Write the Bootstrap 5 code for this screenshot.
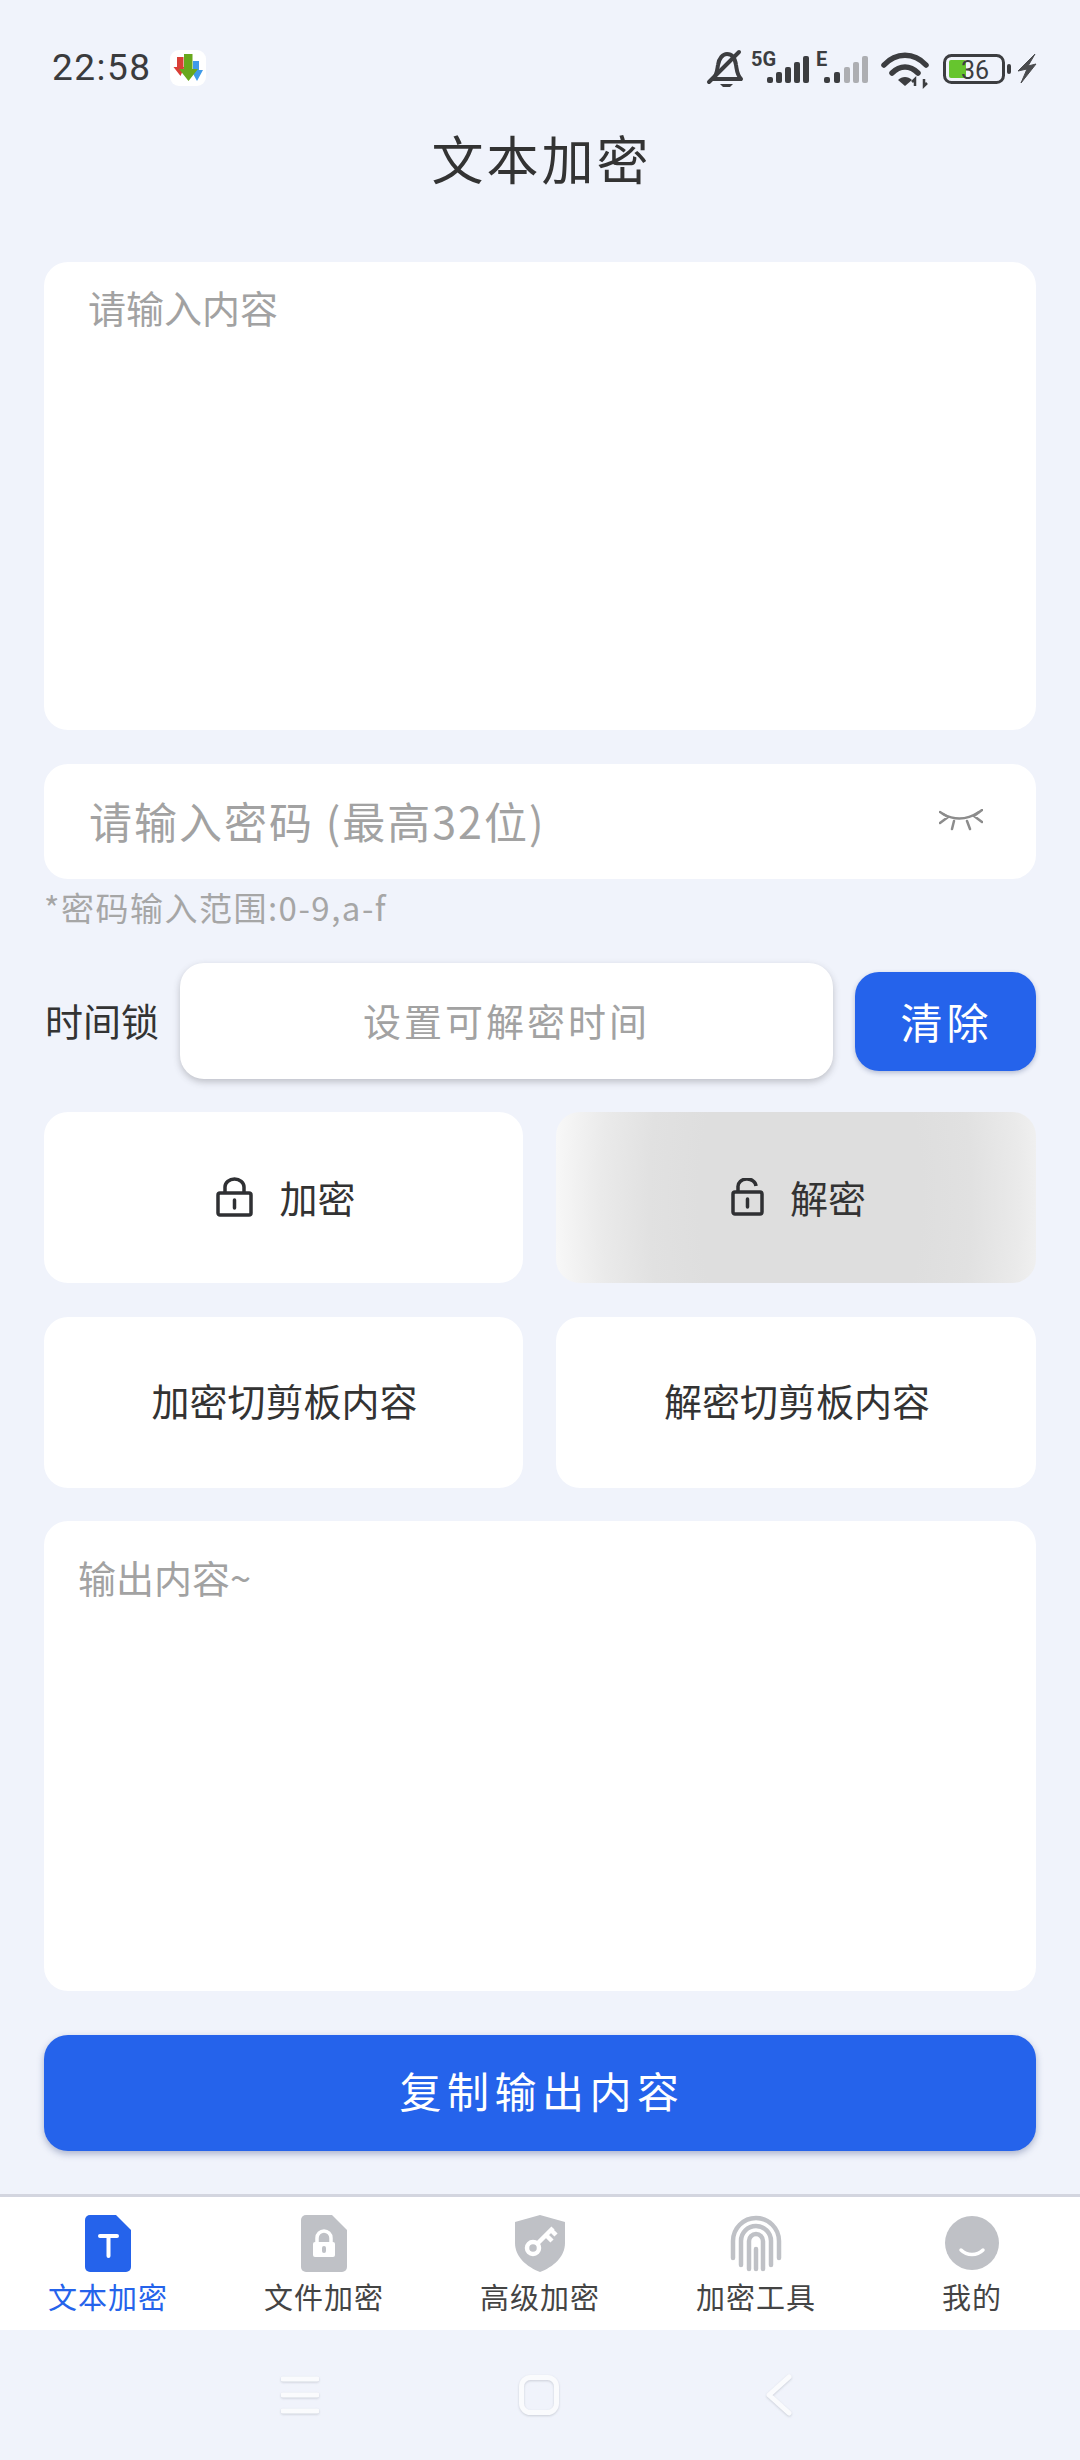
<!DOCTYPE html>
<html lang="zh-CN">
<head>
    <meta charset="UTF-8" />
    <title>文本加密</title>
    <meta name="viewport" content="width=device-width, initial-scale=1" />
    <link href="https://cdn.jsdelivr.net/npm/bootstrap@5.3.0/dist/css/bootstrap.min.css" rel="stylesheet" />
    <style>
        body {
            background-color: #f0f3fb;
            color: #333;
            font-family: "Noto Sans CJK SC", "Noto Sans", sans-serif;
            width: 1080px;
            height: 2460px;
            overflow: hidden;
        }
        .status-row { height: 136px; padding: 0 40px 0 52px; }
        .status-time { font-family: Roboto, sans-serif; font-size: 37px; letter-spacing: 1.500px; color: #3a3b3d; width: 118px; }
        .page-title { font-size: 52px; line-height: 43px; height: 48px; padding-left: 3px; letter-spacing: 3px; margin: 0; font-weight: 400; text-align: center; color: #333; }
        .page-main { padding: 0 44px; margin-top: 78px; }
        .panel { background: #fff; border-radius: 24px; border: 0; }
        .field-hint { color: #a2a2a2; }
        .panel-input { height: 468px; padding: 21px 44px; font-size: 38px; line-height: 48px; }
        .panel-pass { height: 115px; margin-top: 34px; padding: 0 53px 3px 45px; font-size: 43px; letter-spacing: 2px; }
        .pass-hint { font-size: 33px; line-height: 44px; margin-top: 6px; letter-spacing: 1.500px; color: #a6a6a6; }
        .lock-row { margin-top: 34px; height: 116px; }
        .lock-label { width: 136px; font-size: 38px; padding: 0 0 3px 1px; color: #333; }
        .lock-input { width: 653px; height: 116px; padding-bottom: 4px; font-size: 38px; letter-spacing: 3px; box-shadow: 0 3px 7px rgba(60, 60, 70, .28); }
        .btn-clear { width: 181px; height: 99px; margin-left: 22px; background: #2563eb; color: #fff; font-size: 42px; letter-spacing: 4px; border-radius: 24px; border: 0; padding: 0 0 2px 2px; box-shadow: 0 2px 5px rgba(40, 60, 120, .3); }
        .btn-clear:hover { background: #2563eb; color: #fff; }
        .action-grid { display: grid; grid-template-columns: 479px 480px; column-gap: 33px; row-gap: 34px; margin-top: 33px; }
        .btn-action { height: 171px; font-size: 38px; color: #333; padding: 0 0 6px 2px; }
        .btn-action:hover { background: #fff; color: #333; }
        .btn-pressed, .btn-pressed:hover { background: radial-gradient(ellipse 58% 300% at 53% 50%, #dedede 40%, #e1e1e1 58%, #eaeaea 75%, #f6f6f6 90%, #fff 100%); }
        .action-inner { gap: 26px; margin-top: 4px; padding-left: 3px; }
        .panel-output { height: 470px; margin-top: 33px; padding: 32px 34px; font-size: 38px; line-height: 48px; }
        .btn-copy { display: block; width: 100%; height: 116px; margin-top: 44px; padding: 0 0 8px 4px; background: #2563eb; color: #fff; font-size: 42px; letter-spacing: 5.500px; border-radius: 24px; border: 0; box-shadow: 0 3px 7px rgba(40, 60, 120, .35); }
        .btn-copy:hover { background: #2563eb; color: #fff; }
        .tab-strip { margin-top: 43px; height: 136px; border-top: 3px solid #d3d5df; background: #fff; }
        .tab-item { width: 216px; padding-top: 18px; font-size: 29px; letter-spacing: 1px; line-height: 36px; color: #444; }
        .tab-item svg { display: block; margin-bottom: 6px; }
        .tab-active { color: #2563eb; }
        .sys-nav { height: 130px; padding-left: 281px; }
        .sys-nav svg { filter: drop-shadow(0 1px 1px rgba(120, 125, 140, .3)); }
        .sys-home { margin-left: 200px; }
        .sys-back { margin-left: 207px; }
    </style>
</head>
<body>

    <div class="status-row d-flex align-items-center">
        <div class="status-time">22:58</div>
        <svg width="36" height="36" viewBox="0 0 36 36">
            <rect width="36" height="36" rx="9" fill="#fff" />
            <path d="M7 7h6.500v10h1l-4 9-7-9H7z" fill="#d93f36" />
            <path d="M23 11h6v9h4l-6 11-6-11h2z" fill="#3f9ae8" />
            <path d="M14 4h8.500v15H28l-9.500 12L9 19h5z" fill="#68a81c" />
        </svg>
        <svg class="ms-auto" width="340" height="45" viewBox="700 45 340 45">
            <!-- bell with slash -->
            <path d="M713 78c4-4 4-8 5-14 1-7 5-11 9-11 5 0 8 4 9 11 1 6 1 10 5 14z" fill="none" stroke="#3c3d40" stroke-width="4" stroke-linejoin="round" />
            <path d="M709 81 739 51" stroke="#3c3d40" stroke-width="4" stroke-linecap="round" />
            <path d="M720 83h13l-3 3h-7z" fill="#3c3d40" />
            <!-- 5G signal -->
            <text x="751" y="65" font-family="Roboto, sans-serif" font-size="20" font-weight="700" fill="#3c3d40">5G</text>
            <g fill="#3c3d40">
                <rect x="767" y="76" width="6" height="6" rx="2" />
                <rect x="776" y="71" width="6" height="11" rx="2" />
                <rect x="785" y="66" width="6" height="16" rx="2" />
                <rect x="794" y="61" width="6" height="21" rx="2" />
                <rect x="803" y="55" width="6" height="27" rx="2" />
            </g>
            <!-- E signal -->
            <text x="816" y="65" font-family="Roboto, sans-serif" font-size="20" font-weight="700" fill="#3c3d40">E</text>
            <g fill="#3c3d40">
                <rect x="824" y="76" width="6" height="6" rx="2" />
                <rect x="834" y="71" width="6" height="11" rx="2" />
            </g>
            <g fill="#adaeb2">
                <rect x="844" y="66" width="6" height="16" rx="2" />
                <rect x="853" y="61" width="6" height="21" rx="2" />
                <rect x="862" y="55" width="6" height="27" rx="2" />
            </g>
            <!-- wifi -->
            <g fill="none" stroke="#3c3d40" stroke-width="5.500" stroke-linecap="round">
                <path d="M884 64c12-13 30-13 42 0" />
                <path d="M892 72c8-8 18-8 26 0" />
            </g>
            <path d="M898 79c4-4 10-4 14 0l-7 6z" fill="#3c3d40" />
            <path d="M915 85v-7l-3 3M924 78v7l3-3" fill="none" stroke="#3c3d40" stroke-width="2.500" />
            <!-- battery -->
            <rect x="944.500" y="54.500" width="59" height="27" rx="7" fill="none" stroke="#3c3d40" stroke-width="3" />
            <rect x="949" y="59" width="17" height="18" rx="2" fill="#66c52e" />
            <text x="975" y="78" text-anchor="middle" font-family="Roboto, sans-serif" font-size="25" fill="#3c3d40">36</text>
            <rect x="1007" y="63" width="4" height="10" rx="2" fill="#3c3d40" />
            <path d="M1035 53 1018 70 1027 68 1021 82 1036 63 1028 65z" fill="#4a4b4e" stroke="#4a4b4e" stroke-width="1" stroke-linejoin="round" />
        </svg>
    </div>

    <h1 class="page-title">文本加密</h1>

    <div class="page-main">
        <div class="panel panel-input field-hint">请输入内容</div>

        <div class="panel panel-pass field-hint d-flex align-items-center justify-content-between">
            <span>请输入密码 (最高32位)</span>
            <svg width="44" height="22" viewBox="0 0 44 22" fill="none" stroke="#8c8c8c" stroke-width="2.500" stroke-linecap="round">
                <path d="M4 5Q22 15 40 3" />
                <path d="M1 3 9 8 1 14M43 1 35 7 43 13M15 12 13 20M28 12 31 20" />
            </svg>
        </div>

        <div class="pass-hint">*密码输入范围:0-9,a-f</div>

        <div class="lock-row d-flex align-items-center">
            <div class="lock-label">时间锁</div>
            <div class="panel lock-input field-hint d-flex align-items-center justify-content-center">设置可解密时间</div>
            <button type="button" class="btn btn-clear">清除</button>
        </div>

        <div class="action-grid">
            <button type="button" class="btn panel btn-action">
                <span class="d-flex align-items-center justify-content-center action-inner">
                    <svg width="37" height="40" viewBox="0 0 37 40" fill="none" stroke="#2f3033" stroke-width="3.500">
                        <rect x="2" y="16" width="33" height="22" rx="2" />
                        <path d="M9 16V10a9.500 8 0 0 1 19 0v6" />
                        <path d="M18.500 23v8" stroke-linecap="round" />
                    </svg>
                    <span>加密</span>
                </span>
            </button>
            <button type="button" class="btn panel btn-action btn-pressed">
                <span class="d-flex align-items-center justify-content-center action-inner">
                    <svg width="33" height="38" viewBox="0 0 33 38" fill="none" stroke="#2f3033" stroke-width="3.500">
                        <rect x="2" y="14" width="29" height="22" rx="2" />
                        <path d="M7 14V9a9 7.500 0 0 1 18-1" />
                        <path d="M16.500 21v8" stroke-linecap="round" />
                    </svg>
                    <span>解密</span>
                </span>
            </button>
            <button type="button" class="btn panel btn-action">加密切剪板内容</button>
            <button type="button" class="btn panel btn-action">解密切剪板内容</button>
        </div>

        <div class="panel panel-output field-hint">输出内容~</div>

        <button type="button" class="btn btn-copy">复制输出内容</button>
    </div>

    <div class="tab-strip d-flex">
        <div class="tab-item tab-active d-flex flex-column align-items-center">
            <svg width="46" height="57" viewBox="0 0 46 57">
                <path d="M5 0h26l15 15v37a5 5 0 0 1-5 5H5a5 5 0 0 1-5-5V5a5 5 0 0 1 5-5z" fill="#2563eb" />
                <path d="M15 21h17M23.500 21v20" stroke="#fff" stroke-width="4" stroke-linecap="round" fill="none" />
            </svg>
            <span>文本加密</span>
        </div>
        <div class="tab-item d-flex flex-column align-items-center">
            <svg width="46" height="57" viewBox="0 0 46 57">
                <path d="M5 0h26l15 15v37a5 5 0 0 1-5 5H5a5 5 0 0 1-5-5V5a5 5 0 0 1 5-5z" fill="#bfc1c6" />
                <rect x="12" y="27" width="22" height="15" rx="2" fill="#fff" />
                <path d="M16 28v-5a7 7 0 0 1 14 0v5" fill="none" stroke="#fff" stroke-width="3.500" />
                <rect x="21" y="31" width="4" height="7" rx="2" fill="#bfc1c6" />
            </svg>
            <span>文件加密</span>
        </div>
        <div class="tab-item d-flex flex-column align-items-center">
            <svg width="50" height="57" viewBox="0 0 50 57">
                <path d="M25 0 50 7V28C50 42 38 52 25 57 12 52 0 42 0 28V7z" fill="#bfc1c6" />
                <circle cx="18" cy="33" r="6" fill="none" stroke="#fff" stroke-width="4.500" />
                <path d="M22 29 38 13M31 20 37 26M36 15 41 20" fill="none" stroke="#fff" stroke-width="4.500" />
            </svg>
            <span>高级加密</span>
        </div>
        <div class="tab-item d-flex flex-column align-items-center">
            <svg width="52" height="57" viewBox="0 0 52 57" fill="none" stroke="#bfc1c6" stroke-width="4.500" stroke-linecap="round">
                <path d="M3 43V26a23 23 0 0 1 46 0V43" />
                <path d="M11 50V26a15 15 0 0 1 30 0V50" />
                <path d="M19 54V26a7 7 0 0 1 14 0V54" />
                <path d="M26 34V54" />
            </svg>
            <span>加密工具</span>
        </div>
        <div class="tab-item d-flex flex-column align-items-center">
            <svg width="54" height="57" viewBox="0 0 54 57">
                <circle cx="27" cy="28" r="27" fill="#bfc1c6" />
                <path d="M16 35c6 6 16 6 22 0" fill="none" stroke="#fff" stroke-width="3.500" stroke-linecap="round" />
            </svg>
            <span>我的</span>
        </div>
    </div>

    <div class="sys-nav d-flex align-items-center">
        <svg width="38" height="40" viewBox="0 0 38 40" stroke="#fafbfd" stroke-width="5" stroke-linecap="round">
            <path d="M2 4H36M2 20H36M2 36H36" />
        </svg>
        <svg class="sys-home" width="40" height="40" viewBox="0 0 40 40" fill="none" stroke="#fafbfd" stroke-width="5">
            <rect x="2.500" y="2.500" width="35" height="35" rx="9" />
        </svg>
        <svg class="sys-back" width="26" height="42" viewBox="0 0 26 42" fill="none" stroke="#fafbfd" stroke-width="5" stroke-linecap="round" stroke-linejoin="round">
            <path d="M23 3 3 21 23 39" />
        </svg>
    </div>

    <script src="https://cdn.jsdelivr.net/npm/bootstrap@5.3.0/dist/js/bootstrap.bundle.min.js"></script>
</body>
</html>
